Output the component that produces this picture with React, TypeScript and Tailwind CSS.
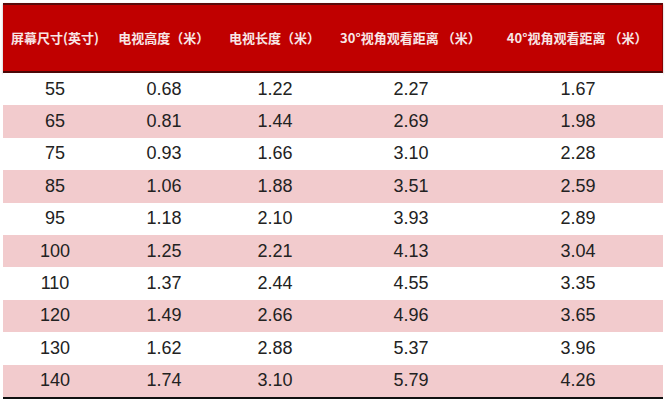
import React from "react";

const rows = [
  ["55", "0.68", "1.22", "2.27", "1.67"],
  ["65", "0.81", "1.44", "2.69", "1.98"],
  ["75", "0.93", "1.66", "3.10", "2.28"],
  ["85", "1.06", "1.88", "3.51", "2.59"],
  ["95", "1.18", "2.10", "3.93", "2.89"],
  ["100", "1.25", "2.21", "4.13", "3.04"],
  ["110", "1.37", "2.44", "4.55", "3.35"],
  ["120", "1.49", "2.66", "4.96", "3.65"],
  ["130", "1.62", "2.88", "5.37", "3.96"],
  ["140", "1.74", "3.10", "5.79", "4.26"],
];

const headers = [
  "屏幕尺寸(英寸)",
  "电视高度（米）",
  "电视长度（米）",
  "30°视角观看距离 （米）",
  "40°视角观看距离 （米）",
];

const widths = ["w-[104px]", "w-[114px]", "w-[108px]", "w-[164px]", "w-[170px]"];

export default function App() {
  return (
    <div className="w-[668px] h-[402px] bg-white pt-[3px] pl-[3px]">
      <div className="w-[660px] flex flex-col">
        <div className="h-[70px] bg-[#c00000] border-t-2 border-b-2 border-t-[#5a0a0a] border-b-[#4a0808] border-r border-r-[#8a0000] flex items-center shadow-[0_1px_2px_rgba(0,0,0,0.3)]">
          {headers.map((h, i) => (
            <div
              key={i}
              className={`${widths[i]} text-center text-[13px] font-bold text-[#f8e6e6] whitespace-nowrap`}
              style={{ fontFamily: '"Noto Sans CJK SC", "Liberation Sans", sans-serif' }}
            >
              {h}
            </div>
          ))}
        </div>
        {rows.map((r, ri) => (
          <div
            key={ri}
            className={`h-[32.4px] flex items-center ${ri % 2 === 1 ? "bg-[#f2cbcd]" : "bg-white"}`}
          >
            {r.map((c, ci) => (
              <div
                key={ci}
                className={`${widths[ci]} text-center text-[18px] text-[#222222]`}
                style={{ fontFamily: '"Liberation Sans", Arial, sans-serif' }}
              >
                {c}
              </div>
            ))}
          </div>
        ))}
        <div className="h-[2px] bg-[#111111]" />
      </div>
    </div>
  );
}
